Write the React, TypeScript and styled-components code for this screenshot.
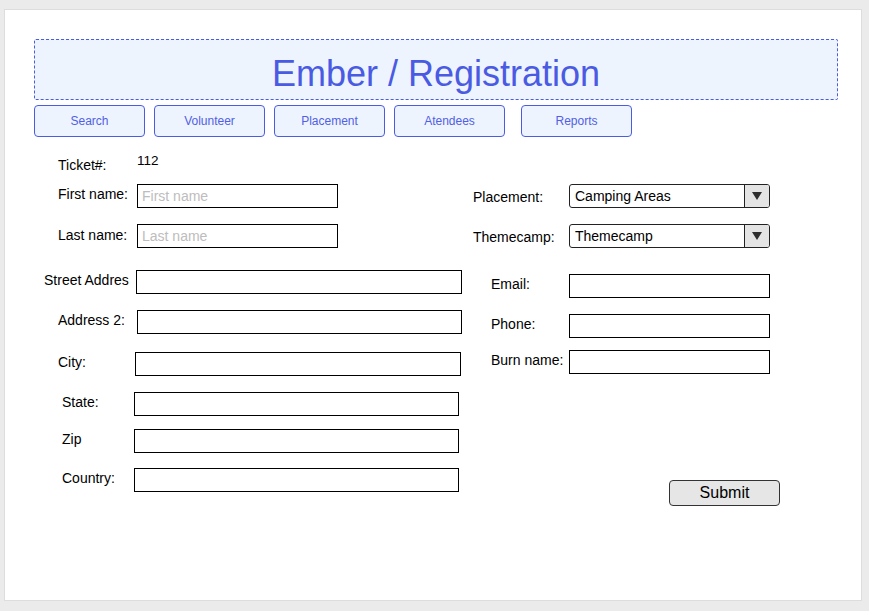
import React from "react";
import styled, { createGlobalStyle } from "styled-components";

const Global = createGlobalStyle`
  html, body { margin: 0; padding: 0; background: #ebebeb; }
  body { font-family: "Liberation Sans", Arial, Helvetica, sans-serif; }
  * { box-sizing: border-box; }
`;

const FONT = `"Liberation Sans", Arial, Helvetica, sans-serif`;

const Panel = styled.div`
  margin: 9px 0 0 4px;
  width: 858px;
  height: 592px;
  background: #ffffff;
  border: 1px solid #dddddd;
  padding: 29px 0 0 29px;
`;

const Header = styled.header`
  width: 804px;
  height: 61px;
  border: 1px dashed #4a5de2;
  border-radius: 2px;
  background: #eef4fd;
  padding-top: 13px;
  text-align: center;
`;

const Title = styled.h1`
  margin: 0;
  font-family: ${FONT};
  font-weight: 400;
  font-size: 36px;
  line-height: 41px;
  color: #4a5be3;
`;

const Nav = styled.nav`
  display: flex;
  gap: 9px;
  margin-top: 5px;
`;

const NavButton = styled.button<{ $extra?: number }>`
  width: 111px;
  height: 32px;
  margin-left: ${(p) => p.$extra ?? 0}px;
  padding: 0;
  border: 1px solid #4a5de2;
  border-radius: 4px;
  background: #eef4fd;
  color: #5060e6;
  font-family: ${FONT};
  font-size: 12px;
  cursor: pointer;
`;

const Form = styled.form`
  display: flex;
  margin-top: 16px;
`;

const Column = styled.div<{ $w: number }>`
  display: flex;
  flex-direction: column;
  width: ${(p) => p.$w}px;
`;

const Row = styled.div<{ $top: number }>`
  display: flex;
  align-items: flex-start;
  margin-top: ${(p) => p.$top}px;
`;

const Label = styled.label<{ $indent: number; $w: number; $drop: number }>`
  flex: none;
  width: ${(p) => p.$w}px;
  padding-left: ${(p) => p.$indent}px;
  margin-top: ${(p) => p.$drop}px;
  font-family: ${FONT};
  font-size: 14px;
  color: #000;
  white-space: nowrap;
  overflow: visible;
`;

const Value = styled.span`
  font-family: ${FONT};
  font-size: 13.5px;
  color: #000;
`;

const TextInput = styled.input<{ $w: number }>`
  flex: none;
  width: ${(p) => p.$w}px;
  height: 24px;
  margin: 0;
  padding: 0 4px;
  border: 1px solid #000;
  border-radius: 0;
  background: #fff;
  font-family: ${FONT};
  font-size: 14px;
  color: #000;
  outline: none;
  &::placeholder {
    color: #bdbdbd;
  }
`;

const SelectBox = styled.div`
  flex: none;
  display: flex;
  align-items: stretch;
  width: 201px;
  height: 24px;
  border: 1px solid #222;
  border-radius: 3px;
  overflow: hidden;
  background: #fff;
`;

const SelectText = styled.span`
  flex: 1;
  display: flex;
  align-items: center;
  padding-left: 5px;
  font-family: ${FONT};
  font-size: 14px;
  color: #000;
`;

const SelectArrow = styled.span`
  flex: none;
  width: 25px;
  display: flex;
  align-items: center;
  justify-content: center;
  border-left: 1px solid #222;
  background: #e4e4e4;
  &::after {
    content: "";
    display: block;
    border-left: 5px solid transparent;
    border-right: 5px solid transparent;
    border-top: 8px solid #2e2e2e;
  }
`;

const SubmitButton = styled.button<{ $offset: number }>`
  margin-left: ${(p) => p.$offset}px;
  width: 111px;
  height: 26px;
  padding: 0;
  border: 1px solid #333;
  border-radius: 4px;
  background: #e6e6e6;
  color: #000;
  font-family: ${FONT};
  font-size: 16px;
  cursor: pointer;
`;

type Field = {
  label: string;
  top: number;
  indent: number;
  inputX: number;
  w: number;
  drop: number;
  placeholder?: string;
};

const leftFields: Field[] = [
  { label: "First name:", top: 11, indent: 24, inputX: 103, w: 201, drop: 2, placeholder: "First name" },
  { label: "Last name:", top: 16, indent: 24, inputX: 103, w: 201, drop: 3, placeholder: "Last name" },
  { label: "Street Addres", top: 22, indent: 10, inputX: 102, w: 326, drop: 2 },
  { label: "Address 2:", top: 16, indent: 24, inputX: 103, w: 325, drop: 2 },
  { label: "City:", top: 18, indent: 24, inputX: 101, w: 326, drop: 2 },
  { label: "State:", top: 16, indent: 28, inputX: 100, w: 325, drop: 2 },
  { label: "Zip", top: 13, indent: 28, inputX: 100, w: 325, drop: 2 },
  { label: "Country:", top: 15, indent: 28, inputX: 100, w: 325, drop: 2 },
];

const selects = [
  { label: "Placement:", value: "Camping Areas", top: 31 },
  { label: "Themecamp:", value: "Themecamp", top: 16 },
];

const rightFields = [
  { label: "Email:", top: 26 },
  { label: "Phone:", top: 16 },
  { label: "Burn name:", top: 12 },
];

const navItems = ["Search", "Volunteer", "Placement", "Atendees", "Reports"];

export default function App() {
  return (
    <>
      <Global />
      <Panel>
        <Header>
          <Title>Ember / Registration</Title>
        </Header>
        <Nav>
          {navItems.map((n) => (
            <NavButton key={n} type="button" $extra={n === "Reports" ? 7 : 0}>
              {n}
            </NavButton>
          ))}
        </Nav>
        <Form onSubmit={(e) => e.preventDefault()}>
          <Column $w={438}>
            <Row $top={0}>
              <Label $indent={24} $w={103} $drop={4}>
                Ticket#:
              </Label>
              <Value>112</Value>
            </Row>
            {leftFields.map((f) => (
              <Row key={f.label} $top={f.top}>
                <Label $indent={f.indent} $w={f.inputX} $drop={f.drop}>
                  {f.label}
                </Label>
                <TextInput $w={f.w} placeholder={f.placeholder} />
              </Row>
            ))}
          </Column>
          <Column $w={340}>
            {selects.map((s) => (
              <Row key={s.label} $top={s.top}>
                <Label $indent={1} $w={97} $drop={5}>
                  {s.label}
                </Label>
                <SelectBox>
                  <SelectText>{s.value}</SelectText>
                  <SelectArrow />
                </SelectBox>
              </Row>
            ))}
            {rightFields.map((f) => (
              <Row key={f.label} $top={f.top}>
                <Label $indent={19} $w={97} $drop={2}>
                  {f.label}
                </Label>
                <TextInput $w={201} />
              </Row>
            ))}
            <Row $top={106}>
              <SubmitButton type="submit" $offset={197}>
                Submit
              </SubmitButton>
            </Row>
          </Column>
        </Form>
      </Panel>
    </>
  );
}
